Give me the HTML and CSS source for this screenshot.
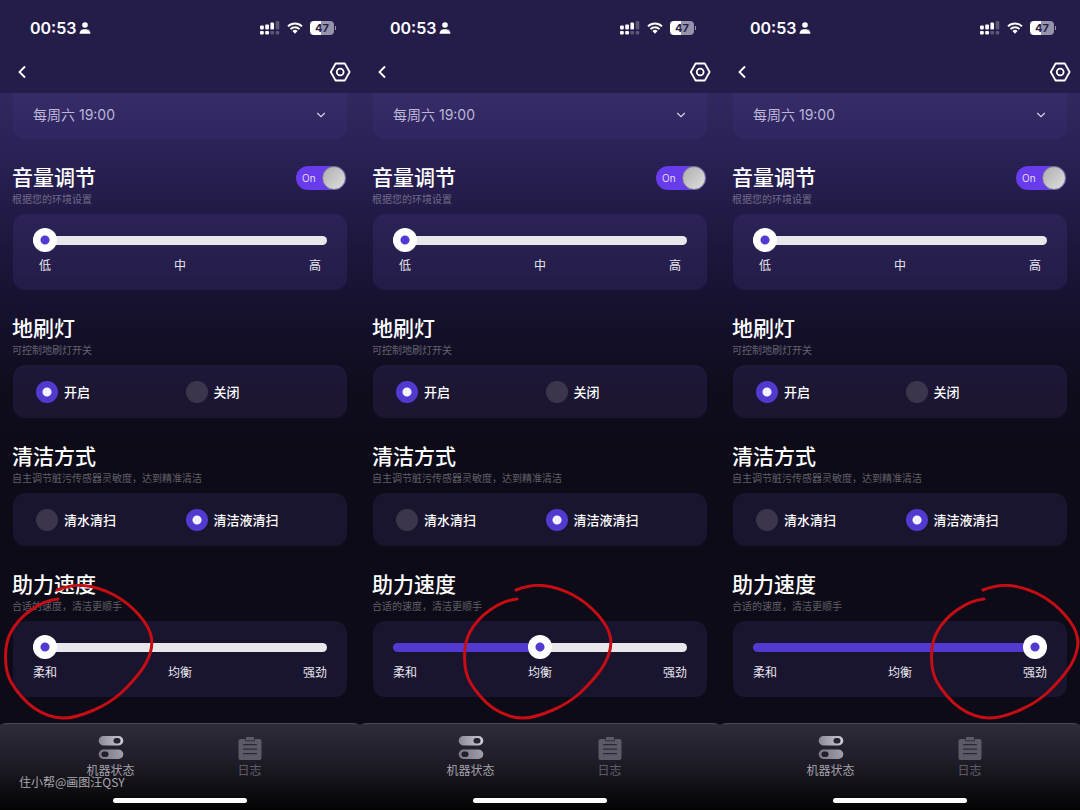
FILE: index.html
```html
<!DOCTYPE html>
<html lang="zh-CN">
<head>
    <meta charset="UTF-8">
    <meta name="viewport" content="width=device-width, initial-scale=1.0">
    <title>机器状态</title>
    <link rel="stylesheet" href="styles.css">
</head>
<body>
    <!-- shared icons -->
    <svg class="icon-defs" aria-hidden="true">
        <defs>
            <linearGradient id="pillFill" x1="0" y1="0" x2="1" y2="0">
                <stop offset="0" stop-color="#8b8897"/>
                <stop offset="1" stop-color="#cfcdd8"/>
            </linearGradient>
            <linearGradient id="pillFillDim" x1="0" y1="0" x2="1" y2="0">
                <stop offset="0" stop-color="#777483"/>
                <stop offset="1" stop-color="#a19fac"/>
            </linearGradient>
        </defs>
        <symbol id="person" viewBox="0 0 12 12">
            <circle cx="6" cy="3" r="2.8" fill="#fff"/>
            <path d="M.6 11.8C.6 8.600 2.600 7.200 6 7.200s5.400 1.400 5.400 4.600z" fill="#fff"/>
        </symbol>
        <symbol id="signal" viewBox="0 0 20 14">
            <g fill="#fff">
                <rect x="0" y="4.500" width="3.800" height="4" rx="1"/>
                <rect x="5.200" y="3.500" width="3.800" height="5" rx="1"/>
                <rect x="10.400" y="1.500" width="3.600" height="7" rx="1"/>
                <rect x="0" y="10" width="3.800" height="3.500" rx="1"/>
                <rect x="5.200" y="10" width="3.800" height="3.500" rx="1"/>
            </g>
            <g fill="#fff" opacity=".25">
                <rect x="15.700" y="0" width="3.600" height="8.500" rx="1"/>
                <rect x="10.400" y="10" width="3.600" height="3.500" rx="1"/>
                <rect x="15.700" y="10" width="3.600" height="3.500" rx="1"/>
            </g>
        </symbol>
        <symbol id="wifi" viewBox="0 0 16 12">
            <path d="M1 4.400a10 10 0 0 1 14 0M3.500 7.100a6.400 6.400 0 0 1 9 0" fill="none" stroke="#fff" stroke-width="2"/>
            <path d="M5.400 9a3.700 3.700 0 0 1 5.200 0L8 11.700z" fill="#fff"/>
        </symbol>
        <symbol id="back" viewBox="0 0 12 16">
            <path d="M9 2.500 3.500 8 9 13.500" fill="none" stroke="#fff" stroke-width="1.800"/>
        </symbol>
        <symbol id="hexagon" viewBox="0 0 22 22">
            <path d="M6.600 2.500h9.200L20.600 11l-4.800 8.500H6.600L1.800 11z" fill="none" stroke="#fff" stroke-width="1.800" stroke-linejoin="round"/>
            <circle cx="11.200" cy="11" r="3.400" fill="none" stroke="#fff" stroke-width="1.800"/>
        </symbol>
        <symbol id="chevron" viewBox="0 0 10 6">
            <path d="M1.200 1 5 4.700 8.800 1" fill="none" stroke="#d6d1ea" stroke-width="1.200"/>
        </symbol>
        <symbol id="machine" viewBox="0 0 26 24">
            <rect x=".7" y="0" width="24.600" height="9.500" rx="4.700" fill="url(#pillFill)"/>
            <rect x="15.500" y="2" width="7" height="5.500" rx="2.700" fill="#262431"/>
            <rect x=".7" y="13.500" width="24.600" height="9.500" rx="4.700" fill="url(#pillFillDim)"/>
            <rect x="3.500" y="15.500" width="7" height="5.500" rx="2.700" fill="#211f2a"/>
        </symbol>
        <symbol id="log" viewBox="0 0 24 24">
            <path d="M8 1h8v2h5.500q2 0 2 2v17q0 2-2 2h-19q-2 0-2-2V5q0-2 2-2H8z" fill="#5c5a65"/>
            <path d="M7.500 2.500v2.300h9V2.500" fill="none" stroke="#34323d" stroke-width="1"/>
            <path d="M5 8.700h14M5 13.200h14M5 17.700h14" stroke="#2a2832" stroke-width="1.200"/>
        </symbol>
        <symbol id="ring" viewBox="0 0 152 136">
            <path d="M54 6C62 3 70.500.7 80 1.500S101.700 6.100 111 11 129.700 23.800 136 31 147.300 46 148.500 54 148 69.800 143 79 126.700 101.200 118 109 100.700 121.800 91 126 70 134.300 60 134 39.700 130 31 124 12.800 106.500 8 98 2.500 81.300 2.500 73 3.700 55.800 8 48 20.200 31.500 28 26 44 16 55 15" fill="none" stroke="#c50d13" stroke-width="3" stroke-linecap="round"/>
        </symbol>
    </svg>

    <div class="phones">
        <div class="phone">
            <header class="top">
                <div class="status-bar">
                    <span class="clock">00:53</span>
                    <svg class="icon-person"><use href="#person"/></svg>
                    <div class="status-right">
                        <svg class="icon-signal"><use href="#signal"/></svg>
                        <svg class="icon-wifi"><use href="#wifi"/></svg>
                        <span class="battery">47</span>
                    </div>
                </div>
                <nav class="nav-bar">
                    <button class="icon-btn" aria-label="返回"><svg class="icon-back"><use href="#back"/></svg></button>
                    <button class="icon-btn" aria-label="设置"><svg class="icon-hexagon"><use href="#hexagon"/></svg></button>
                </nav>
            </header>

            <main class="content">
                <div class="card schedule">
                    <select aria-label="时间">
                        <option>每周六 19:00</option>
                    </select>
                    <svg class="icon-chevron"><use href="#chevron"/></svg>
                </div>

                <section class="setting">
                    <div class="setting-head">
                        <div>
                            <h2>音量调节</h2>
                            <p>根据您的环境设置</p>
                        </div>
                        <label class="toggle">
                            <input type="checkbox" aria-label="音量调节" checked>
                            <span>On</span>
                        </label>
                    </div>
                    <div class="card slider-card">
                        <input type="range" min="0" max="2" value="0" aria-label="音量调节" style="--fill: 0%">
                        <div class="ticks"><span>低</span><span>中</span><span>高</span></div>
                    </div>
                </section>

                <section class="setting">
                    <h2>地刷灯</h2>
                    <p>可控制地刷灯开关</p>
                    <div class="card radio-card">
                        <label><input type="radio" name="light1" checked>开启</label>
                        <label><input type="radio" name="light1">关闭</label>
                    </div>
                </section>

                <section class="setting">
                    <h2>清洁方式</h2>
                    <p>自主调节脏污传感器灵敏度，达到精准清洁</p>
                    <div class="card radio-card">
                        <label><input type="radio" name="clean1">清水清扫</label>
                        <label><input type="radio" name="clean1" checked>清洁液清扫</label>
                    </div>
                </section>

                <section class="setting">
                    <h2>助力速度</h2>
                    <p>合适的速度，清洁更顺手</p>
                    <div class="card slider-card">
                        <input type="range" min="0" max="2" value="0" aria-label="助力速度" style="--fill: 0%">
                        <div class="ticks"><span>柔和</span><span>均衡</span><span>强劲</span></div>
                    </div>
                    <svg class="mark mark-low"><use href="#ring"/></svg>
                </section>
            </main>

            <footer class="tab-bar">
                <div class="tabs">
                    <button class="tab active"><svg class="icon-machine"><use href="#machine"/></svg>机器状态</button>
                    <button class="tab"><svg class="icon-log"><use href="#log"/></svg>日志</button>
                </div>
                <div class="home-indicator"></div>
                <div class="watermark">住小帮@画图汪QSY</div>
            </footer>
        </div>

        <div class="phone">
            <header class="top">
                <div class="status-bar">
                    <span class="clock">00:53</span>
                    <svg class="icon-person"><use href="#person"/></svg>
                    <div class="status-right">
                        <svg class="icon-signal"><use href="#signal"/></svg>
                        <svg class="icon-wifi"><use href="#wifi"/></svg>
                        <span class="battery">47</span>
                    </div>
                </div>
                <nav class="nav-bar">
                    <button class="icon-btn" aria-label="返回"><svg class="icon-back"><use href="#back"/></svg></button>
                    <button class="icon-btn" aria-label="设置"><svg class="icon-hexagon"><use href="#hexagon"/></svg></button>
                </nav>
            </header>

            <main class="content">
                <div class="card schedule">
                    <select aria-label="时间">
                        <option>每周六 19:00</option>
                    </select>
                    <svg class="icon-chevron"><use href="#chevron"/></svg>
                </div>

                <section class="setting">
                    <div class="setting-head">
                        <div>
                            <h2>音量调节</h2>
                            <p>根据您的环境设置</p>
                        </div>
                        <label class="toggle">
                            <input type="checkbox" aria-label="音量调节" checked>
                            <span>On</span>
                        </label>
                    </div>
                    <div class="card slider-card">
                        <input type="range" min="0" max="2" value="0" aria-label="音量调节" style="--fill: 0%">
                        <div class="ticks"><span>低</span><span>中</span><span>高</span></div>
                    </div>
                </section>

                <section class="setting">
                    <h2>地刷灯</h2>
                    <p>可控制地刷灯开关</p>
                    <div class="card radio-card">
                        <label><input type="radio" name="light2" checked>开启</label>
                        <label><input type="radio" name="light2">关闭</label>
                    </div>
                </section>

                <section class="setting">
                    <h2>清洁方式</h2>
                    <p>自主调节脏污传感器灵敏度，达到精准清洁</p>
                    <div class="card radio-card">
                        <label><input type="radio" name="clean2">清水清扫</label>
                        <label><input type="radio" name="clean2" checked>清洁液清扫</label>
                    </div>
                </section>

                <section class="setting">
                    <h2>助力速度</h2>
                    <p>合适的速度，清洁更顺手</p>
                    <div class="card slider-card">
                        <input type="range" min="0" max="2" value="1" aria-label="助力速度" style="--fill: 50%">
                        <div class="ticks"><span>柔和</span><span>均衡</span><span>强劲</span></div>
                    </div>
                    <svg class="mark mark-mid"><use href="#ring"/></svg>
                </section>
            </main>

            <footer class="tab-bar">
                <div class="tabs">
                    <button class="tab active"><svg class="icon-machine"><use href="#machine"/></svg>机器状态</button>
                    <button class="tab"><svg class="icon-log"><use href="#log"/></svg>日志</button>
                </div>
                <div class="home-indicator"></div>
            </footer>
        </div>

        <div class="phone">
            <header class="top">
                <div class="status-bar">
                    <span class="clock">00:53</span>
                    <svg class="icon-person"><use href="#person"/></svg>
                    <div class="status-right">
                        <svg class="icon-signal"><use href="#signal"/></svg>
                        <svg class="icon-wifi"><use href="#wifi"/></svg>
                        <span class="battery">47</span>
                    </div>
                </div>
                <nav class="nav-bar">
                    <button class="icon-btn" aria-label="返回"><svg class="icon-back"><use href="#back"/></svg></button>
                    <button class="icon-btn" aria-label="设置"><svg class="icon-hexagon"><use href="#hexagon"/></svg></button>
                </nav>
            </header>

            <main class="content">
                <div class="card schedule">
                    <select aria-label="时间">
                        <option>每周六 19:00</option>
                    </select>
                    <svg class="icon-chevron"><use href="#chevron"/></svg>
                </div>

                <section class="setting">
                    <div class="setting-head">
                        <div>
                            <h2>音量调节</h2>
                            <p>根据您的环境设置</p>
                        </div>
                        <label class="toggle">
                            <input type="checkbox" aria-label="音量调节" checked>
                            <span>On</span>
                        </label>
                    </div>
                    <div class="card slider-card">
                        <input type="range" min="0" max="2" value="0" aria-label="音量调节" style="--fill: 0%">
                        <div class="ticks"><span>低</span><span>中</span><span>高</span></div>
                    </div>
                </section>

                <section class="setting">
                    <h2>地刷灯</h2>
                    <p>可控制地刷灯开关</p>
                    <div class="card radio-card">
                        <label><input type="radio" name="light3" checked>开启</label>
                        <label><input type="radio" name="light3">关闭</label>
                    </div>
                </section>

                <section class="setting">
                    <h2>清洁方式</h2>
                    <p>自主调节脏污传感器灵敏度，达到精准清洁</p>
                    <div class="card radio-card">
                        <label><input type="radio" name="clean3">清水清扫</label>
                        <label><input type="radio" name="clean3" checked>清洁液清扫</label>
                    </div>
                </section>

                <section class="setting">
                    <h2>助力速度</h2>
                    <p>合适的速度，清洁更顺手</p>
                    <div class="card slider-card">
                        <input type="range" min="0" max="2" value="2" aria-label="助力速度" style="--fill: 100%">
                        <div class="ticks"><span>柔和</span><span>均衡</span><span>强劲</span></div>
                    </div>
                    <svg class="mark mark-high"><use href="#ring"/></svg>
                </section>
            </main>

            <footer class="tab-bar">
                <div class="tabs">
                    <button class="tab active"><svg class="icon-machine"><use href="#machine"/></svg>机器状态</button>
                    <button class="tab"><svg class="icon-log"><use href="#log"/></svg>日志</button>
                </div>
                <div class="home-indicator"></div>
            </footer>
        </div>
    </div>
</body>
</html>
```

FILE: styles.css
```css
*,
*::before,
*::after {
    margin: 0;
    padding: 0;
    box-sizing: border-box;
}

body {
    background: #0d0b17;
    color: #fff;
    font-family: Inter, "Noto Sans CJK SC", sans-serif;
}

button,
select {
    font-family: inherit;
    color: inherit;
    background: none;
    border: none;
}

svg {
    display: block;
    flex-shrink: 0;
}

.icon-defs {
    position: absolute;
    width: 0;
    height: 0;
}

.phones {
    display: flex;
    min-height: 100vh;
}

.phone {
    flex: 1;
    min-width: 0;
    display: flex;
    flex-direction: column;
}

/* status bar + nav */
.top {
    background: #251d49;
    padding-bottom: 5px;
}

.status-bar {
    display: flex;
    align-items: center;
    height: 56px;
    padding: 0 24px 0 30px;
}

.clock {
    font-size: 16px;
    font-weight: 600;
}

.icon-person {
    width: 12px;
    height: 12px;
    margin-left: 3px;
}

.status-right {
    display: flex;
    align-items: center;
    gap: 7px;
    margin-left: auto;
}

.icon-signal {
    width: 20px;
    height: 14px;
}

.icon-wifi {
    width: 16px;
    height: 12px;
}

.battery {
    position: relative;
    width: 24px;
    height: 14px;
    margin-right: 2px;
    border-radius: 4px;
    background: linear-gradient(90deg, #fff 47%, #9893aa 47%);
    color: #251d49;
    font-size: 11px;
    font-weight: 700;
    line-height: 14px;
    text-align: center;
}

.battery::after {
    content: "";
    position: absolute;
    right: -2px;
    top: 5px;
    width: 1px;
    height: 4px;
    background: #9893aa;
}

.nav-bar {
    display: flex;
    justify-content: space-between;
    align-items: center;
    height: 32px;
    padding: 0 9px 0 16px;
}

.icon-back {
    width: 12px;
    height: 16px;
}

.icon-hexagon {
    width: 22px;
    height: 22px;
}

/* settings list */
.content {
    flex: 1;
    padding: 0 12px 26px;
    background: linear-gradient(180deg, #31285f 0, #2a2156 60px, #1f1840 140px, #171230 205px, #0f0c1c 300px, #0d0b17 380px);
}

.card {
    margin: 0 1px;
    border-radius: 12px;
    background: rgba(120, 100, 220, 0.12);
}

.schedule {
    position: relative;
    border-radius: 0 0 12px 12px;
    background: rgba(120, 100, 220, 0.07);
}

.schedule select {
    display: block;
    width: 100%;
    height: 46px;
    padding: 0 20px 4px;
    appearance: none;
    font-size: 14px;
    color: #bdb6d6;
}

.icon-chevron {
    position: absolute;
    right: 21px;
    top: 19px;
    width: 10px;
    height: 6px;
    pointer-events: none;
}

.setting {
    position: relative;
    margin-top: 25px;
}

.setting h2 {
    font-size: 21px;
    font-weight: 500;
    line-height: 28px;
}

.setting p {
    font-size: 10px;
    line-height: 14px;
    margin-bottom: 8px;
    color: rgba(255, 255, 255, 0.35);
}

.setting-head {
    display: flex;
    justify-content: space-between;
    padding-right: 2px;
}

/* on/off switch */
.toggle {
    position: relative;
    width: 50px;
    height: 24px;
    margin-top: 2px;
}

.toggle input {
    display: block;
    width: 100%;
    height: 100%;
    appearance: none;
    border-radius: 12px;
    background: #683cec;
}

.toggle input::before {
    content: "";
    display: block;
    width: 24px;
    height: 24px;
    margin-left: auto;
    border-radius: 50%;
    border: 1px solid #77738a;
    background: linear-gradient(135deg, #adadad, #e0e0e0);
}

.toggle span {
    position: absolute;
    left: 6px;
    top: 0;
    font-size: 10px;
    line-height: 24px;
    color: #e4dcff;
}

/* sliders */
.slider-card {
    padding: 14px 20px 15px;
}

.slider-card input {
    display: block;
    width: 100%;
    height: 24px;
    appearance: none;
    background: none;
}

.slider-card input::-webkit-slider-runnable-track {
    height: 9px;
    border-radius: 5px;
    background: linear-gradient(90deg, #5239cf var(--fill), #e8e7ea var(--fill));
}

.slider-card input::-webkit-slider-thumb {
    appearance: none;
    width: 24px;
    height: 24px;
    margin-top: -8px;
    border-radius: 50%;
    background: radial-gradient(circle, #5239cf 4px, #fff 5px);
}

.ticks {
    display: flex;
    justify-content: space-between;
    margin-top: 5px;
    font-size: 12px;
    line-height: 18px;
    color: #e9e7f0;
}

.ticks span {
    min-width: 24px;
    text-align: center;
}

/* radio groups */
.radio-card {
    display: grid;
    grid-template-columns: 1fr 1fr;
    align-items: center;
    height: 53px;
    padding: 0 12px 0 23px;
}

.radio-card label {
    display: flex;
    align-items: center;
    gap: 6px;
    font-size: 13px;
    font-weight: 500;
}

.radio-card input {
    width: 22px;
    height: 22px;
    appearance: none;
    border-radius: 50%;
    background: #3b364b;
}

.radio-card input:checked {
    background: radial-gradient(circle, #f3f0ff 4px, #5239cf 5px);
}

/* hand-drawn ring round the chosen speed */
.mark {
    position: absolute;
    top: 13px;
    width: 152px;
    height: 136px;
    pointer-events: none;
}

.mark-low {
    left: -9px;
}

.mark-mid {
    left: 90px;
}

.mark-high {
    right: -13px;
}

/* bottom tabs */
.tab-bar {
    position: relative;
    padding: 12px 41px 7px;
    border-top: 1px solid #4d4b57;
    border-radius: 8px 8px 0 0 / 3px 3px 0 0;
    background: linear-gradient(180deg, #2f2c3a, #1c1a23 50%, #030304);
}

.tabs {
    display: grid;
    grid-template-columns: 1fr 1fr;
}

.tab {
    display: flex;
    flex-direction: column;
    align-items: center;
    gap: 2px;
    font-size: 12px;
    line-height: 18px;
    color: #5f5d68;
}

.tab.active {
    color: #a3a1ac;
}

.icon-machine {
    width: 26px;
    height: 24px;
}

.icon-log {
    width: 24px;
    height: 24px;
}

.home-indicator {
    width: 48%;
    min-width: 133px;
    height: 5px;
    margin: 18px auto 0;
    border-radius: 3px;
    background: #fff;
}

.watermark {
    position: absolute;
    left: 19px;
    top: 49px;
    font-family: "Noto Sans CJK SC", sans-serif;
    font-size: 12px;
    line-height: 18px;
    color: #a9a8ad;
}
```
